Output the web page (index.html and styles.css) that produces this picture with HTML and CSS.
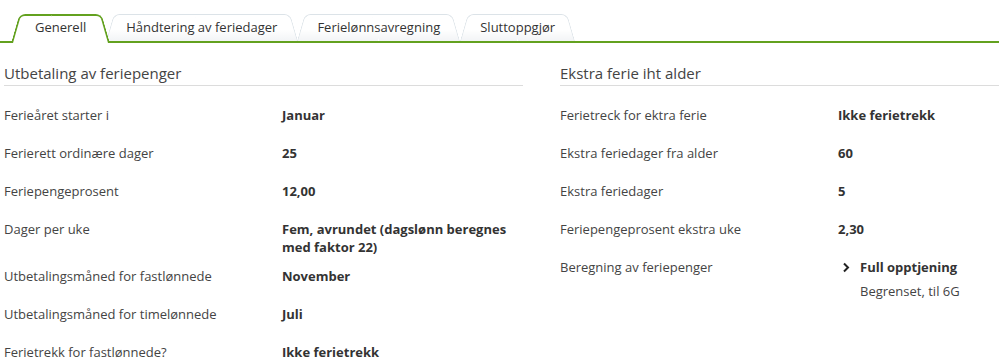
FILE: index.html
```html
<!DOCTYPE html>
<html lang="no">
<head>
    <meta charset="UTF-8">
    <meta name="viewport" content="width=device-width, initial-scale=1.0">
    <title>Feriepenger</title>
    <link rel="stylesheet" href="styles.css">
</head>
<body>
    <div class="tabs">
        <div class="tab active">Generell</div>
        <div class="tab">Håndtering av feriedager</div>
        <div class="tab">Ferielønnsavregning</div>
        <div class="tab">Sluttoppgjør</div>
    </div>

    <div class="content">
        <div class="section">
            <h2>Utbetaling av feriepenger</h2>
            <div class="row">
                <div class="label">Ferieåret starter i</div>
                <div class="value">Januar</div>
            </div>
            <div class="row">
                <div class="label">Ferierett ordinære dager</div>
                <div class="value">25</div>
            </div>
            <div class="row">
                <div class="label">Feriepengeprosent</div>
                <div class="value">12,00</div>
            </div>
            <div class="row">
                <div class="label">Dager per uke</div>
                <div class="value">Fem, avrundet (dagslønn beregnes med faktor 22)</div>
            </div>
            <div class="row">
                <div class="label">Utbetalingsmåned for fastlønnede</div>
                <div class="value">November</div>
            </div>
            <div class="row">
                <div class="label">Utbetalingsmåned for timelønnede</div>
                <div class="value">Juli</div>
            </div>
            <div class="row">
                <div class="label">Ferietrekk for fastlønnede?</div>
                <div class="value">Ikke ferietrekk</div>
            </div>
        </div>

        <div class="section">
            <h2>Ekstra ferie iht alder</h2>
            <div class="row">
                <div class="label">Ferietreck for ektra ferie</div>
                <div class="value">Ikke ferietrekk</div>
            </div>
            <div class="row">
                <div class="label">Ekstra feriedager fra alder</div>
                <div class="value">60</div>
            </div>
            <div class="row">
                <div class="label">Ekstra feriedager</div>
                <div class="value">5</div>
            </div>
            <div class="row">
                <div class="label">Feriepengeprosent ekstra uke</div>
                <div class="value">2,30</div>
            </div>
            <div class="row">
                <div class="label">Beregning av feriepenger</div>
                <div class="value expand">
                    <svg class="chevron" width="9" height="11" viewBox="0 0 9 11"><path d="M2 1.5 L6 5.5 L2 9.5" fill="none" stroke="#222" stroke-width="2"/></svg>
                    <div>
                        <div>Full opptjening</div>
                        <div class="sub">Begrenset, til 6G</div>
                    </div>
                </div>
            </div>
        </div>
    </div>
</body>
</html>
```

FILE: styles.css
```css
body {
    margin: 0;
    font-family: "Open Sans", Arial, sans-serif;
    font-size: 13px;
    color: #444;
    background: #fff;
    overflow: hidden;
}
.tabs {
    display: flex;
    position: relative;
    margin-top: 14px;
    padding-left: 11px;
    height: 29px;
}
.tabs::after {
    content: "";
    position: absolute;
    left: 0;
    right: 0;
    bottom: 0;
    height: 2px;
    background: #63a11f;
    z-index: 1;
}
.tab {
    position: relative;
    padding: 0 20px;
    height: 27px;
    line-height: 26px;
    color: #333;
    cursor: pointer;
}
.tab::before,
.tab::after {
    content: "";
    position: absolute;
    top: 0;
    bottom: 0;
    border: 1px solid #dce3e8;
    border-bottom: none;
    background: linear-gradient(#fff 55%, #f2f4f6);
    transform-origin: bottom;
    z-index: -1;
}
.tab::before {
    left: 0;
    right: 50%;
    border-right: none;
    border-radius: 6px 0 0 0;
    transform: skewX(-16deg);
}
.tab::after {
    left: 50%;
    right: 0;
    border-left: none;
    border-radius: 0 6px 0 0;
    transform: skewX(16deg);
}
.tab.active {
    z-index: 2;
    padding: 0 20px 0 24px;
}
.tab.active::before,
.tab.active::after {
    bottom: -2px;
    border-width: 2px;
    border-color: #63a11f;
    background: #fff;
}
.tab.active::after {
    right: -3px;
}
.content {
    display: flex;
    gap: 37px;
    padding: 20px 4px 0;
}
.section {
    flex: 0 0 519px;
}
h2 {
    margin: 0 0 20px;
    font-size: 15px;
    font-weight: normal;
    line-height: 20px;
    color: #444;
    padding-bottom: 2px;
    border-bottom: 1px solid #dcdcdc;
}
.row {
    display: flex;
    min-height: 27px;
    margin-bottom: 11px;
    line-height: 18px;
}
.label {
    flex: 0 0 278px;
}
.value {
    flex: 1;
    font-weight: bold;
    color: #333;
}
.expand {
    display: flex;
    gap: 9px;
    padding-left: 4px;
}
.chevron {
    margin-top: 4px;
}
.sub {
    font-weight: normal;
    color: #444;
    margin-top: 6px;
}
```
